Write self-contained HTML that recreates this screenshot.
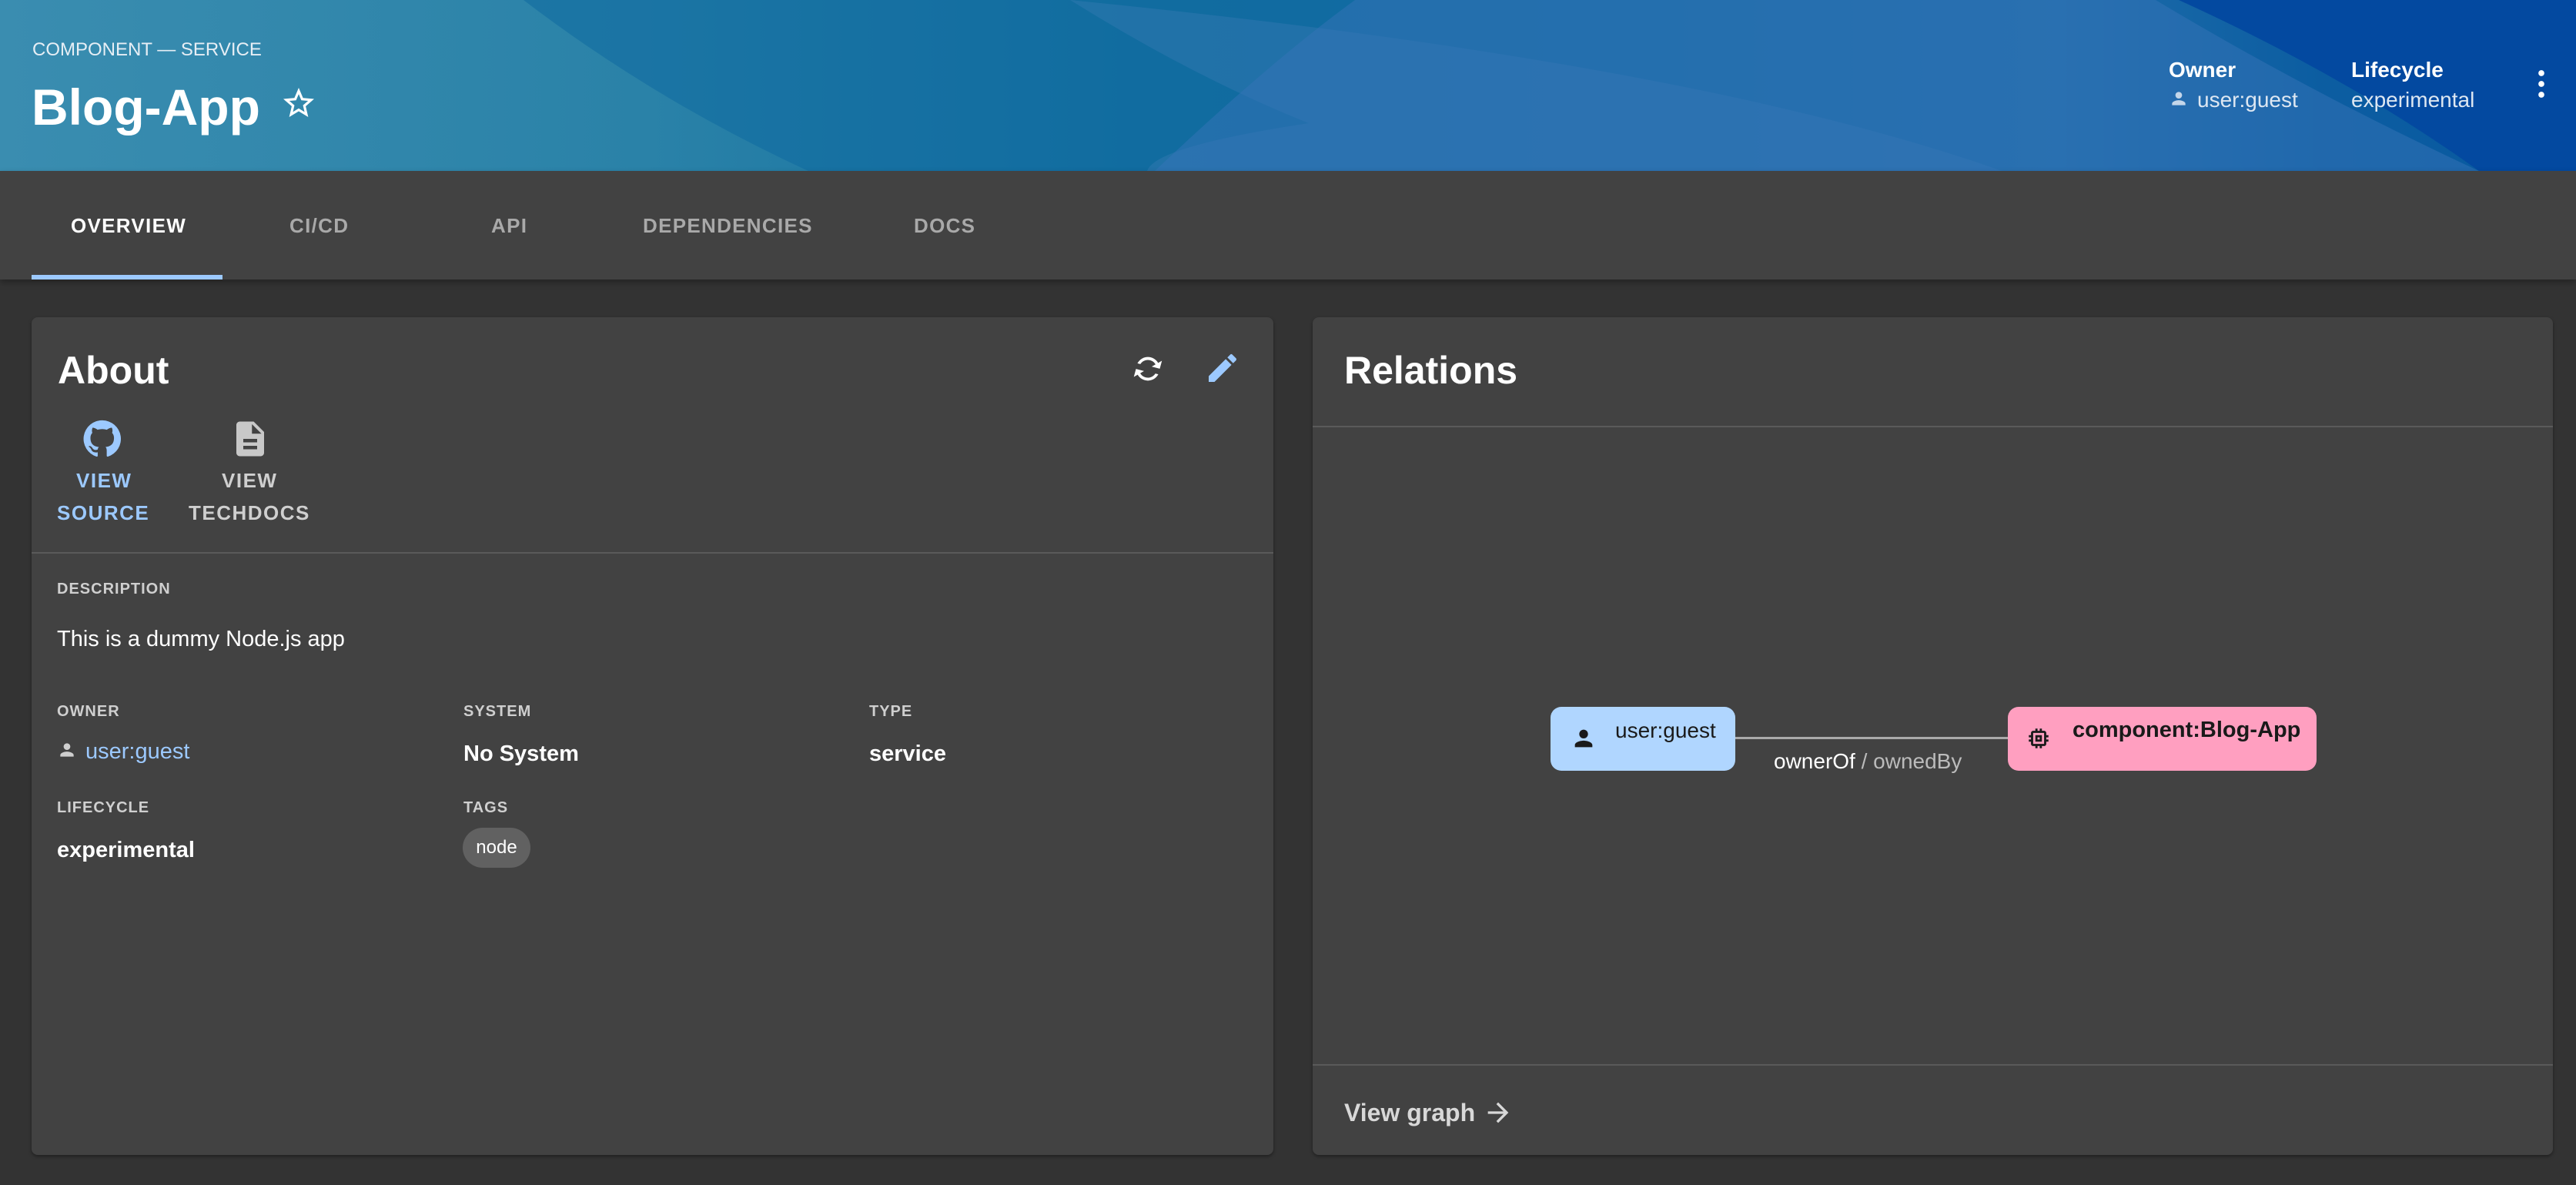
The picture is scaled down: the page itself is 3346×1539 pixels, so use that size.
<!DOCTYPE html>
<html><head><meta charset="utf-8"><style>
*{margin:0;padding:0;box-sizing:border-box}
body{width:3346px;height:1539px;background:#333;font-family:"Liberation Sans",sans-serif;color:#fff;position:relative;overflow:hidden}
.abs{position:absolute}
.hdr{left:0;top:0;width:3346px;height:222px;overflow:hidden;background:linear-gradient(90deg,#3a8db0 0%,#2a82a8 25%,#146fa0 45%,#1a6aaa 65%,#2f6fb5 80%,#0a4fa3 90%,#0046a0 100%)}
.tabs{left:0;top:222px;width:3346px;height:141px;background:#424242;box-shadow:0 4px 8px rgba(0,0,0,.3)}
.tab{position:absolute;top:278px;font-size:26px;font-weight:bold;letter-spacing:1.3px;color:#a9a9a9}
.card{background:#424242;border-radius:8px;box-shadow:0 2px 4px rgba(0,0,0,.4)}
.lbl{position:absolute;font-size:20px;font-weight:bold;letter-spacing:1px;color:#cfcfcf}
.val{position:absolute;font-size:29px;font-weight:bold;color:#fff}
</style></head><body>
<div class="abs hdr">
<svg width="3346" height="222" style="position:absolute;left:0;top:0">
<path d="M680 0 Q850 130 1050 222 L3346 222 L3346 0 Z" fill="#0f6aa0" opacity="0.55"/>
<path d="M1390 0 Q1550 100 1700 160 Q1500 190 1490 222 L2600 222 Q2200 80 1390 0Z" fill="#3f7fb8" opacity="0.35"/>
<path d="M1500 222 Q1650 80 1760 0 L2800 0 Q3000 120 3220 222Z" fill="#3574b8" opacity="0.5"/>
<path d="M2830 0 L3346 0 L3346 222 L3220 222 Q3050 100 2830 0Z" fill="#0349a0"/>
</svg>
<div class="abs" style="left:42px;top:51px;font-size:24px;color:#e6eef5">COMPONENT — SERVICE</div>
<div class="abs" style="left:41px;top:101px;font-size:66px;font-weight:bold">Blog-App</div>
<svg class="abs" style="left:364px;top:110px" width="48" height="48" viewBox="0 0 24 24"><path fill="#fff" d="M22 9.24l-7.19-.62L12 2 9.19 8.63 2 9.24l5.46 4.73L5.82 21 12 17.27 18.18 21l-1.63-7.03L22 9.24zM12 15.4l-3.76 2.27 1-4.28-3.32-2.88 4.38-.38L12 6.1l1.71 4.04 4.38.38-3.32 2.88 1 4.28L12 15.4z"/></svg>
<div class="abs" style="left:2817px;top:75px;font-size:28px;font-weight:bold">Owner</div>
<svg class="abs" style="left:2817px;top:115px" width="26" height="26" viewBox="0 0 24 24"><path fill="#c4d6ea" d="M12 12c2.21 0 4-1.79 4-4s-1.79-4-4-4-4 1.79-4 4 1.79 4 4 4zm0 2c-2.67 0-8 1.34-8 4v2h16v-2c0-2.66-5.33-4-8-4z"/></svg>
<div class="abs" style="left:2854px;top:114px;font-size:28px;color:#dde7f2">user:guest</div>
<div class="abs" style="left:3054px;top:75px;font-size:28px;font-weight:bold">Lifecycle</div>
<div class="abs" style="left:3054px;top:114px;font-size:28px;color:#dde7f2">experimental</div>
<svg class="abs" style="left:3284px;top:88px" width="34" height="42" viewBox="0 0 12 24"><circle cx="6" cy="4" r="2.2" fill="#fff"/><circle cx="6" cy="12" r="2.2" fill="#fff"/><circle cx="6" cy="20" r="2.2" fill="#fff"/></svg>
</div>
<div class="abs tabs"></div>
<div class="tab" style="left:92px;color:#fff">OVERVIEW</div>
<div class="tab" style="left:376px">CI/CD</div>
<div class="tab" style="left:638px">API</div>
<div class="tab" style="left:835px">DEPENDENCIES</div>
<div class="tab" style="left:1187px">DOCS</div>
<div class="abs" style="left:41px;top:357px;width:248px;height:6px;background:#9cc9ff"></div>

<div class="abs card" style="left:41px;top:412px;width:1613px;height:1088px"></div>
<div class="abs" style="left:75px;top:452px;font-size:50px;font-weight:bold">About</div>
<svg class="abs" style="left:1468px;top:456px" width="46" height="46" viewBox="0 0 24 24"><path fill="#fff" d="M12 6v3l4-4-4-4v3c-4.42 0-8 3.58-8 8 0 1.57.46 3.03 1.24 4.26L6.7 14.8c-.45-.83-.7-1.79-.7-2.8 0-3.31 2.69-6 6-6zm6.76 1.74L17.3 9.2c.44.84.7 1.79.7 2.8 0 3.31-2.69 6-6 6v-3l-4 4 4 4v-3c4.42 0 8-3.58 8-8 0-1.57-.46-3.03-1.24-4.26z" transform="rotate(60 12 12)"/></svg>
<svg class="abs" style="left:1564px;top:454px" width="48" height="48" viewBox="0 0 24 24"><path fill="#9cc9ff" d="M3 17.25V21h3.75L17.81 9.94l-3.75-3.75L3 17.25zM20.71 7.04c.39-.39.39-1.02 0-1.41l-2.34-2.34a1 1 0 0 0-1.41 0l-1.83 1.83 3.75 3.75 1.83-1.83z"/></svg>
<svg class="abs" style="left:106px;top:543px" width="54" height="54" viewBox="0 0 24 24"><path fill="#9cc9ff" d="M12 1.3a10.7 10.7 0 0 0-3.4 20.9c.5.1.7-.2.7-.5v-2c-3 .6-3.6-1.3-3.6-1.3-.5-1.2-1.2-1.6-1.2-1.6-1-.7.1-.7.1-.7 1.1.1 1.600 1.1 1.6 1.1 1 1.6 2.5 1.2 3.1.9.1-.7.4-1.2.7-1.4-2.4-.3-4.9-1.2-4.9-5.3 0-1.2.4-2.1 1.1-2.9-.1-.3-.5-1.4.1-2.9 0 0 .9-.3 2.9 1.1a10 10 0 0 1 5.4 0c2-1.4 2.9-1.1 2.9-1.1.6 1.5.2 2.6.1 2.9.7.8 1.1 1.7 1.1 2.9 0 4.1-2.5 5-4.9 5.3.4.3.7 1 .7 2v3c0 .3.2.6.7.5A10.7 10.7 0 0 0 12 1.3z"/></svg>
<div class="abs" style="left:99px;top:609px;font-size:26px;font-weight:bold;letter-spacing:1.5px;color:#9cc9ff">VIEW</div>
<div class="abs" style="left:74px;top:651px;font-size:26px;font-weight:bold;letter-spacing:1.5px;color:#9cc9ff">SOURCE</div>
<svg class="abs" style="left:298px;top:543px" width="54" height="54" viewBox="0 0 24 24"><path fill="#c8c8c8" d="M14 2H6c-1.1 0-2 .9-2 2v16c0 1.1.9 2 2 2h12c1.1 0 2-.9 2-2V8l-6-6zm2 16H8v-2h8v2zm0-4H8v-2h8v2zm-3-5V3.5L18.5 9H13z"/></svg>
<div class="abs" style="left:288px;top:609px;font-size:26px;font-weight:bold;letter-spacing:1.5px;color:#cfcfcf">VIEW</div>
<div class="abs" style="left:245px;top:651px;font-size:26px;font-weight:bold;letter-spacing:1.5px;color:#cfcfcf">TECHDOCS</div>
<div class="abs" style="left:41px;top:717px;width:1613px;height:2px;background:#5a5a5a"></div>
<div class="lbl" style="left:74px;top:754px">DESCRIPTION</div>
<div class="abs" style="left:74px;top:814px;font-size:29px">This is a dummy Node.js app</div>
<div class="lbl" style="left:74px;top:913px">OWNER</div>
<svg class="abs" style="left:74px;top:961px" width="26" height="26" viewBox="0 0 24 24"><path fill="#cfcfcf" d="M12 12c2.21 0 4-1.79 4-4s-1.79-4-4-4-4 1.79-4 4 1.79 4 4 4zm0 2c-2.67 0-8 1.34-8 4v2h16v-2c0-2.66-5.33-4-8-4z"/></svg>
<div class="abs" style="left:111px;top:960px;font-size:29px;color:#9cc9ff">user:guest</div>
<div class="lbl" style="left:602px;top:913px">SYSTEM</div>
<div class="val" style="left:602px;top:963px">No System</div>
<div class="lbl" style="left:1129px;top:913px">TYPE</div>
<div class="val" style="left:1129px;top:963px">service</div>
<div class="lbl" style="left:74px;top:1038px">LIFECYCLE</div>
<div class="val" style="left:74px;top:1088px">experimental</div>
<div class="lbl" style="left:602px;top:1038px">TAGS</div>
<div class="abs" style="left:601px;top:1075px;width:88px;height:52px;border-radius:26px;background:#616161;font-size:24px;line-height:52px;text-align:center">node</div>

<div class="abs card" style="left:1705px;top:412px;width:1611px;height:1088px"></div>
<div class="abs" style="left:1746px;top:452px;font-size:50px;font-weight:bold">Relations</div>
<div class="abs" style="left:1705px;top:553px;width:1611px;height:2px;background:#5a5a5a"></div>
<div class="abs" style="left:1705px;top:1382px;width:1611px;height:2px;background:#5a5a5a"></div>
<div class="abs" style="left:1746px;top:1427px;font-size:32px;font-weight:bold;color:#d8d8d8">View graph</div>
<svg class="abs" style="left:1926px;top:1425px" width="40" height="40" viewBox="0 0 24 24"><path fill="#d8d8d8" d="M12 4l-1.41 1.41L16.17 11H4v2h12.17l-5.58 5.59L12 20l8-8z"/></svg>
<div class="abs" style="left:2253px;top:957px;width:356px;height:3px;background:#aaa"></div>
<div class="abs" style="left:2014px;top:918px;width:240px;height:83px;border-radius:14px;background:#b0d6ff"></div>
<svg class="abs" style="left:2040px;top:942px" width="34" height="34" viewBox="0 0 24 24"><path fill="#1a1a1a" d="M12 12c2.21 0 4-1.79 4-4s-1.79-4-4-4-4 1.79-4 4 1.79 4 4 4zm0 2c-2.67 0-8 1.34-8 4v2h16v-2c0-2.66-5.33-4-8-4z"/></svg>
<div class="abs" style="left:2098px;top:933px;font-size:28px;color:#1a1a1a">user:guest</div>
<div class="abs" style="left:2608px;top:918px;width:401px;height:83px;border-radius:14px;background:#ff9fc0"></div>
<svg class="abs" style="left:2631px;top:942px" width="34" height="34" viewBox="0 0 24 24"><path fill="#1a1a1a" d="M15 9H9v6h6V9zm-2 4h-2v-2h2v2zm8-2V9h-2V7c0-1.1-.9-2-2-2h-2V3h-2v2h-2V3H9v2H7c-1.1 0-2 .9-2 2v2H3v2h2v2H3v2h2v2c0 1.1.9 2 2 2h2v2h2v-2h2v2h2v-2h2c1.1 0 2-.9 2-2v-2h2v-2h-2v-2h2zm-4 6H7V7h10v10z"/></svg>
<div class="abs" style="left:2692px;top:932px;font-size:29px;font-weight:bold;color:#1a1a1a">component:Blog-App</div>
<div class="abs" style="left:2304px;top:973px;font-size:28px;color:#fff">ownerOf <span style="color:#bbb">/ ownedBy</span></div>
</body></html>
